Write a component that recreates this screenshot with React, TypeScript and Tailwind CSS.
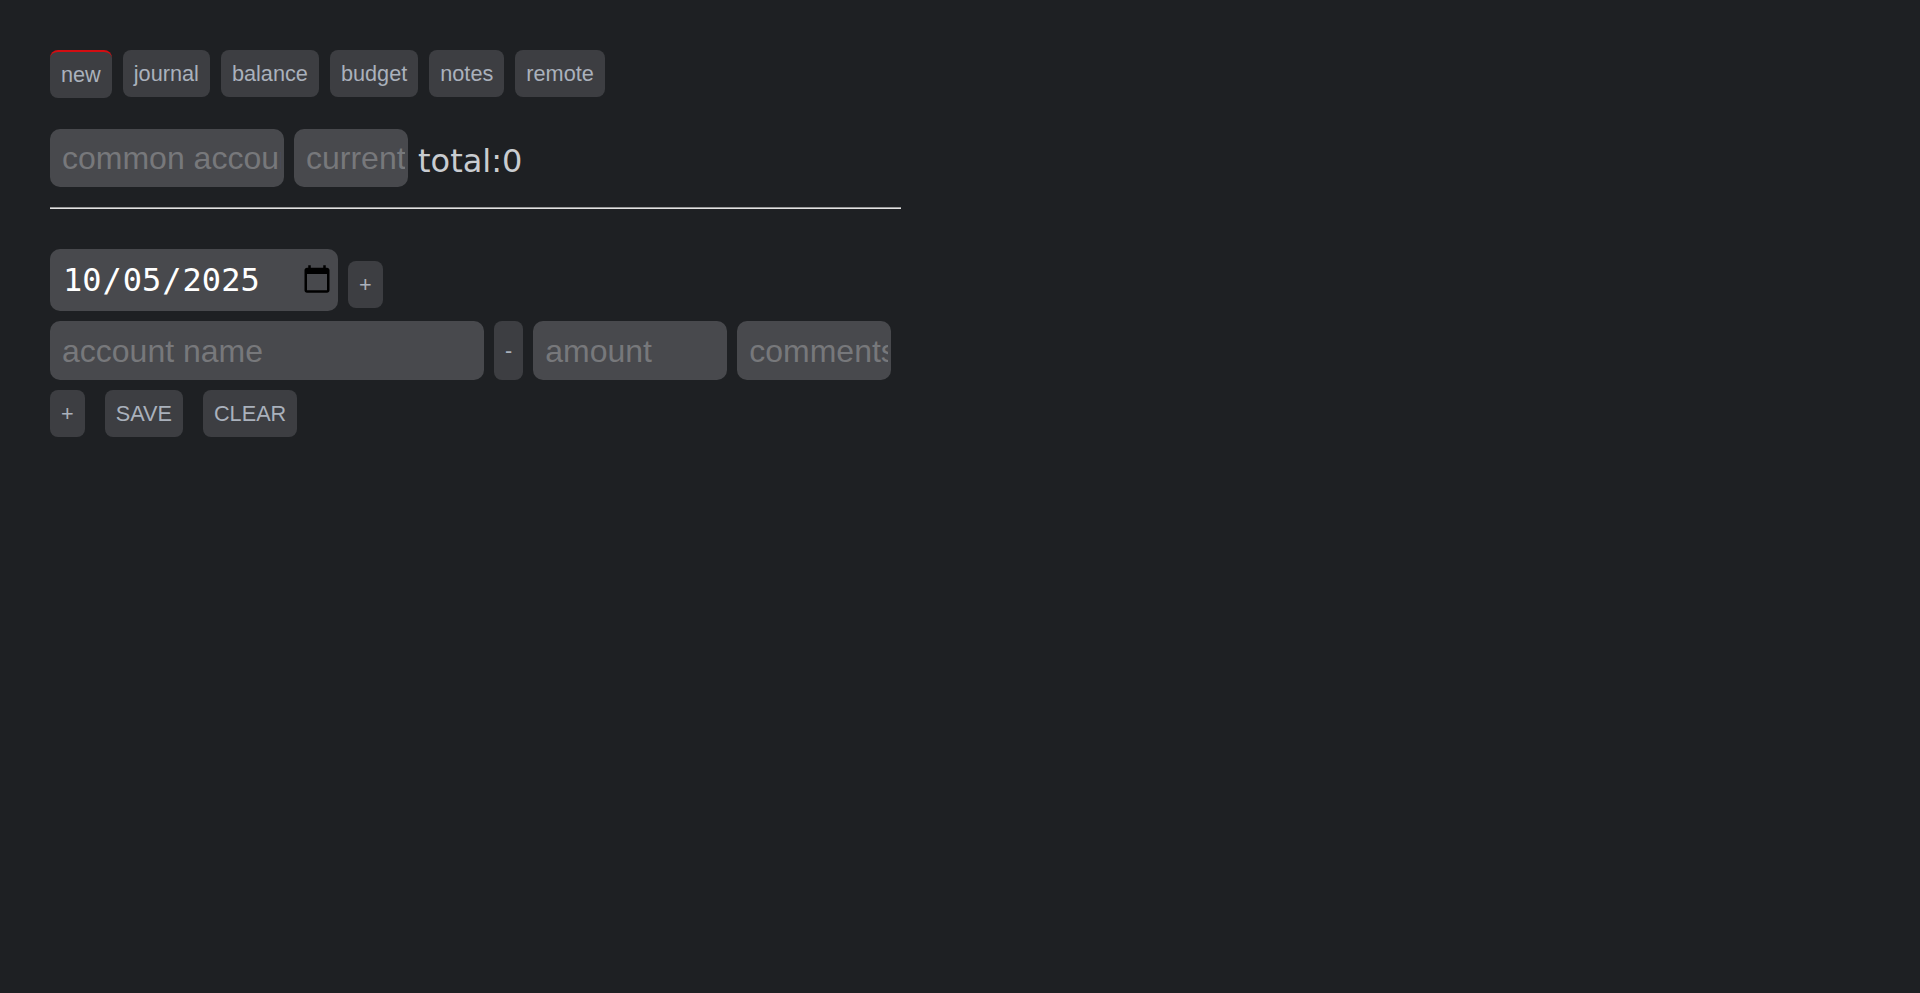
import React, { useState } from "react";

const tabs = ["new", "journal", "balance", "budget", "notes", "remote"];

const btn =
  "rounded-[8px] bg-[#3d3e42] px-[11px] py-[11px] text-[21.7px] leading-[25px] text-[#aab1bc] [font-family:'Liberation_Sans',Arial,sans-serif]";

const field =
  "rounded-[10px] bg-[#48494d] pl-[12px] pr-[3px] py-[11px] text-[32px] leading-[36px] text-[#d8d8d8] placeholder:text-[#77787b] outline-none [font-family:'Liberation_Sans',Arial,sans-serif]";

const App = () => {
  const [active] = useState("new");
  const [date, setDate] = useState("2025-10-05");

  return (
    <div className="min-h-screen bg-[#1e2023] px-[50px] pt-[50px]">
      <nav className="flex items-start gap-[11px]">
        {tabs.map((t) => (
          <button
            key={t}
            className={
              btn +
              (t === active ? " border-t-2 border-[#d40d12] pt-[10px]" : "")
            }
          >
            {t}
          </button>
        ))}
      </nav>

      <div className="mt-[31px] flex w-[851px] items-center gap-[10px]">
        <input className={field + " w-[234px]"} placeholder="common account" />
        <input className={field + " w-[114px]"} placeholder="current" />
        <span className="mt-[6px] text-[32px] leading-[37px] text-[#c9ccd0] [font-family:'DejaVu_Sans',sans-serif]">
          total:0
        </span>
      </div>

      <div className="mt-[20px] w-[851px] border-t border-b border-t-[#9a9a9a] border-b-[#e2e2e2]" />

      <div className="mt-[40px] flex flex-col gap-[10px]">
        <div className="flex items-end gap-[10px]">
          <input
            type="date"
            value={date}
            onChange={(e) => setDate(e.target.value)}
            className="h-[62px] w-[288px] rounded-[10px] bg-[#48494d] pl-[12px] pr-[3px] text-[32px] text-white outline-none [color-scheme:light] [font-family:'DejaVu_Sans_Mono',monospace]"
          />
          <button className={btn + " mb-[3px]"}>+</button>
        </div>

        <div className="flex h-[59px] items-stretch gap-[10px]">
          <input className={field + " w-[434px]"} placeholder="account name" />
          <button className={btn}>-</button>
          <input className={field + " w-[194px]"} placeholder="amount" />
          <input className={field + " w-[154px]"} placeholder="comments" />
        </div>

        <div className="flex items-start gap-[20px]">
          <button className={btn}>+</button>
          <button className={btn}>SAVE</button>
          <button className={btn}>CLEAR</button>
        </div>
      </div>
    </div>
  );
};

export default App;
